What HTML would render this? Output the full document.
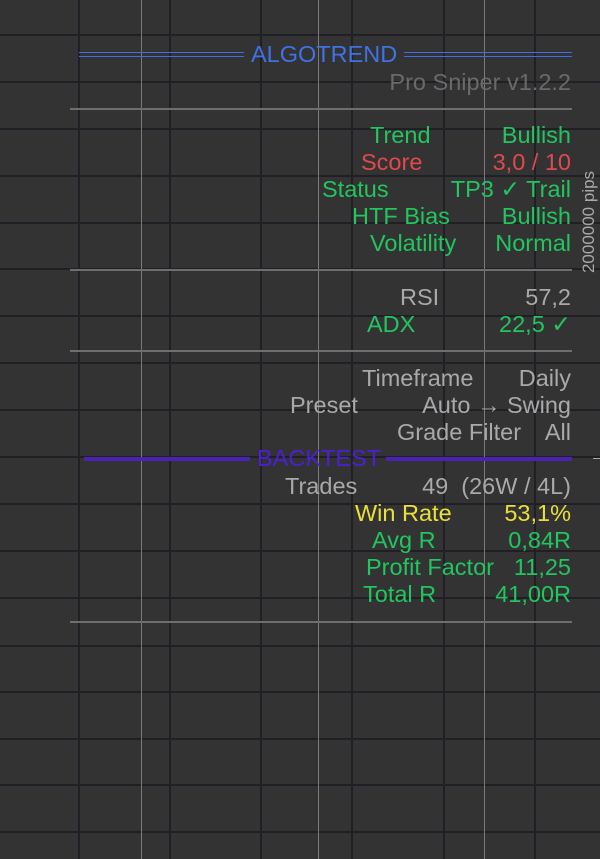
<!DOCTYPE html>
<html><head><meta charset="utf-8"><style>
html,body{margin:0;padding:0}
body{width:600px;height:859px;position:relative;overflow:hidden;background:#333333;font-family:"Liberation Sans",Arial,sans-serif}
.v{position:absolute;top:0;width:2px;height:859px;background:#1f1f25}
.h{position:absolute;left:0;width:600px;height:2px;background:#1f1f25}
.lv{position:absolute;top:0;width:1px;height:859px;background:#7a7a7a}
.r{position:absolute;height:2px;background:#6e6e6e;left:70px;width:502px}
.t{position:absolute;font-size:23.5px;line-height:26px;white-space:nowrap}
.val{right:29px;text-align:right}
.g{color:#22c55e}.rd{color:#e0494d}.gr{color:#a9a9a9}.y{color:#ecdf3a}
</style></head><body>
<div class="v" style="left:78px"></div><div class="v" style="left:169px"></div><div class="v" style="left:260px"></div><div class="v" style="left:351px"></div><div class="v" style="left:443px"></div><div class="v" style="left:534px"></div>
<div class="h" style="top:34px"></div><div class="h" style="top:81px"></div><div class="h" style="top:128px"></div><div class="h" style="top:175px"></div><div class="h" style="top:222px"></div><div class="h" style="top:268px"></div><div class="h" style="top:315px"></div><div class="h" style="top:362px"></div><div class="h" style="top:409px"></div><div class="h" style="top:456px"></div><div class="h" style="top:503px"></div><div class="h" style="top:550px"></div><div class="h" style="top:597px"></div><div class="h" style="top:645px"></div><div class="h" style="top:691px"></div><div class="h" style="top:738px"></div><div class="h" style="top:784px"></div><div class="h" style="top:831px"></div>
<div class="lv" style="left:141px"></div><div class="lv" style="left:318px"></div><div class="lv" style="left:484px"></div>

<div style="position:absolute;left:79px;top:52px;width:165px;height:1px;background:#3f6fe0"></div>
<div style="position:absolute;left:79px;top:56px;width:165px;height:1px;background:#3f6fe0"></div>
<div style="position:absolute;left:404px;top:52px;width:168px;height:1px;background:#3f6fe0"></div>
<div style="position:absolute;left:404px;top:56px;width:168px;height:1px;background:#3f6fe0"></div>
<div class="t" style="left:251px;top:41px;color:#3f72e6">ALGOTREND</div>
<div class="t val" style="top:69px;color:#6a6a6a">Pro Sniper v1.2.2</div>
<div class="r" style="top:108px"></div>

<div class="t g" style="left:370px;top:122px">Trend</div><div class="t g val" style="top:122px">Bullish</div>
<div class="t rd" style="left:361px;top:149px">Score</div><div class="t rd val" style="top:149px">3,0 / 10</div>
<div class="t g" style="left:322px;top:176px">Status</div><div class="t g val" style="top:176px">TP3 ✓ Trail</div>
<div class="t g" style="left:352px;top:203px">HTF Bias</div><div class="t g val" style="top:203px">Bullish</div>
<div class="t g" style="left:370px;top:230px">Volatility</div><div class="t g val" style="top:230px">Normal</div>
<div class="r" style="top:269px"></div>

<div class="t gr" style="left:400px;top:284px">RSI</div><div class="t gr val" style="top:284px">57,2</div>
<div class="t g" style="left:367px;top:311px">ADX</div><div class="t g val" style="top:311px">22,5 ✓</div>
<div class="r" style="top:350px"></div>

<div class="t gr" style="left:362px;top:365px">Timeframe</div><div class="t gr val" style="top:365px">Daily</div>
<div class="t gr" style="left:290px;top:392px">Preset</div><div class="t gr val" style="top:392px">Auto → Swing</div>
<div class="t gr" style="left:397px;top:419px">Grade Filter</div><div class="t gr val" style="top:419px">All</div>

<div style="position:absolute;left:84px;top:457px;width:166px;height:4px;background:#4a22b4"></div>
<div style="position:absolute;left:386px;top:457px;width:186px;height:4px;background:#4a22b4"></div>
<div class="t" style="left:257px;top:445px;color:#4b1fd6">BACKTEST</div>

<div class="t gr" style="left:285px;top:473px">Trades</div><div class="t gr val" style="top:473px">49&nbsp; (26W / 4L)</div>
<div class="t y" style="left:355px;top:500px">Win Rate</div><div class="t y val" style="top:500px">53,1%</div>
<div class="t g" style="left:372px;top:527px">Avg R</div><div class="t g val" style="top:527px">0,84R</div>
<div class="t g" style="left:366px;top:554px">Profit Factor</div><div class="t g val" style="top:554px">11,25</div>
<div class="t g" style="left:363px;top:581px">Total R</div><div class="t g val" style="top:581px">41,00R</div>
<div class="r" style="top:621px"></div>

<div style="position:absolute;left:589px;top:222px;transform:translate(-50%,-50%) rotate(-90deg);color:#a9a9a9;font-size:17px;white-space:nowrap">2000000 pips</div>
<div style="position:absolute;left:593px;top:458px;width:7px;height:1px;background:#aaa"></div>
</body></html>
